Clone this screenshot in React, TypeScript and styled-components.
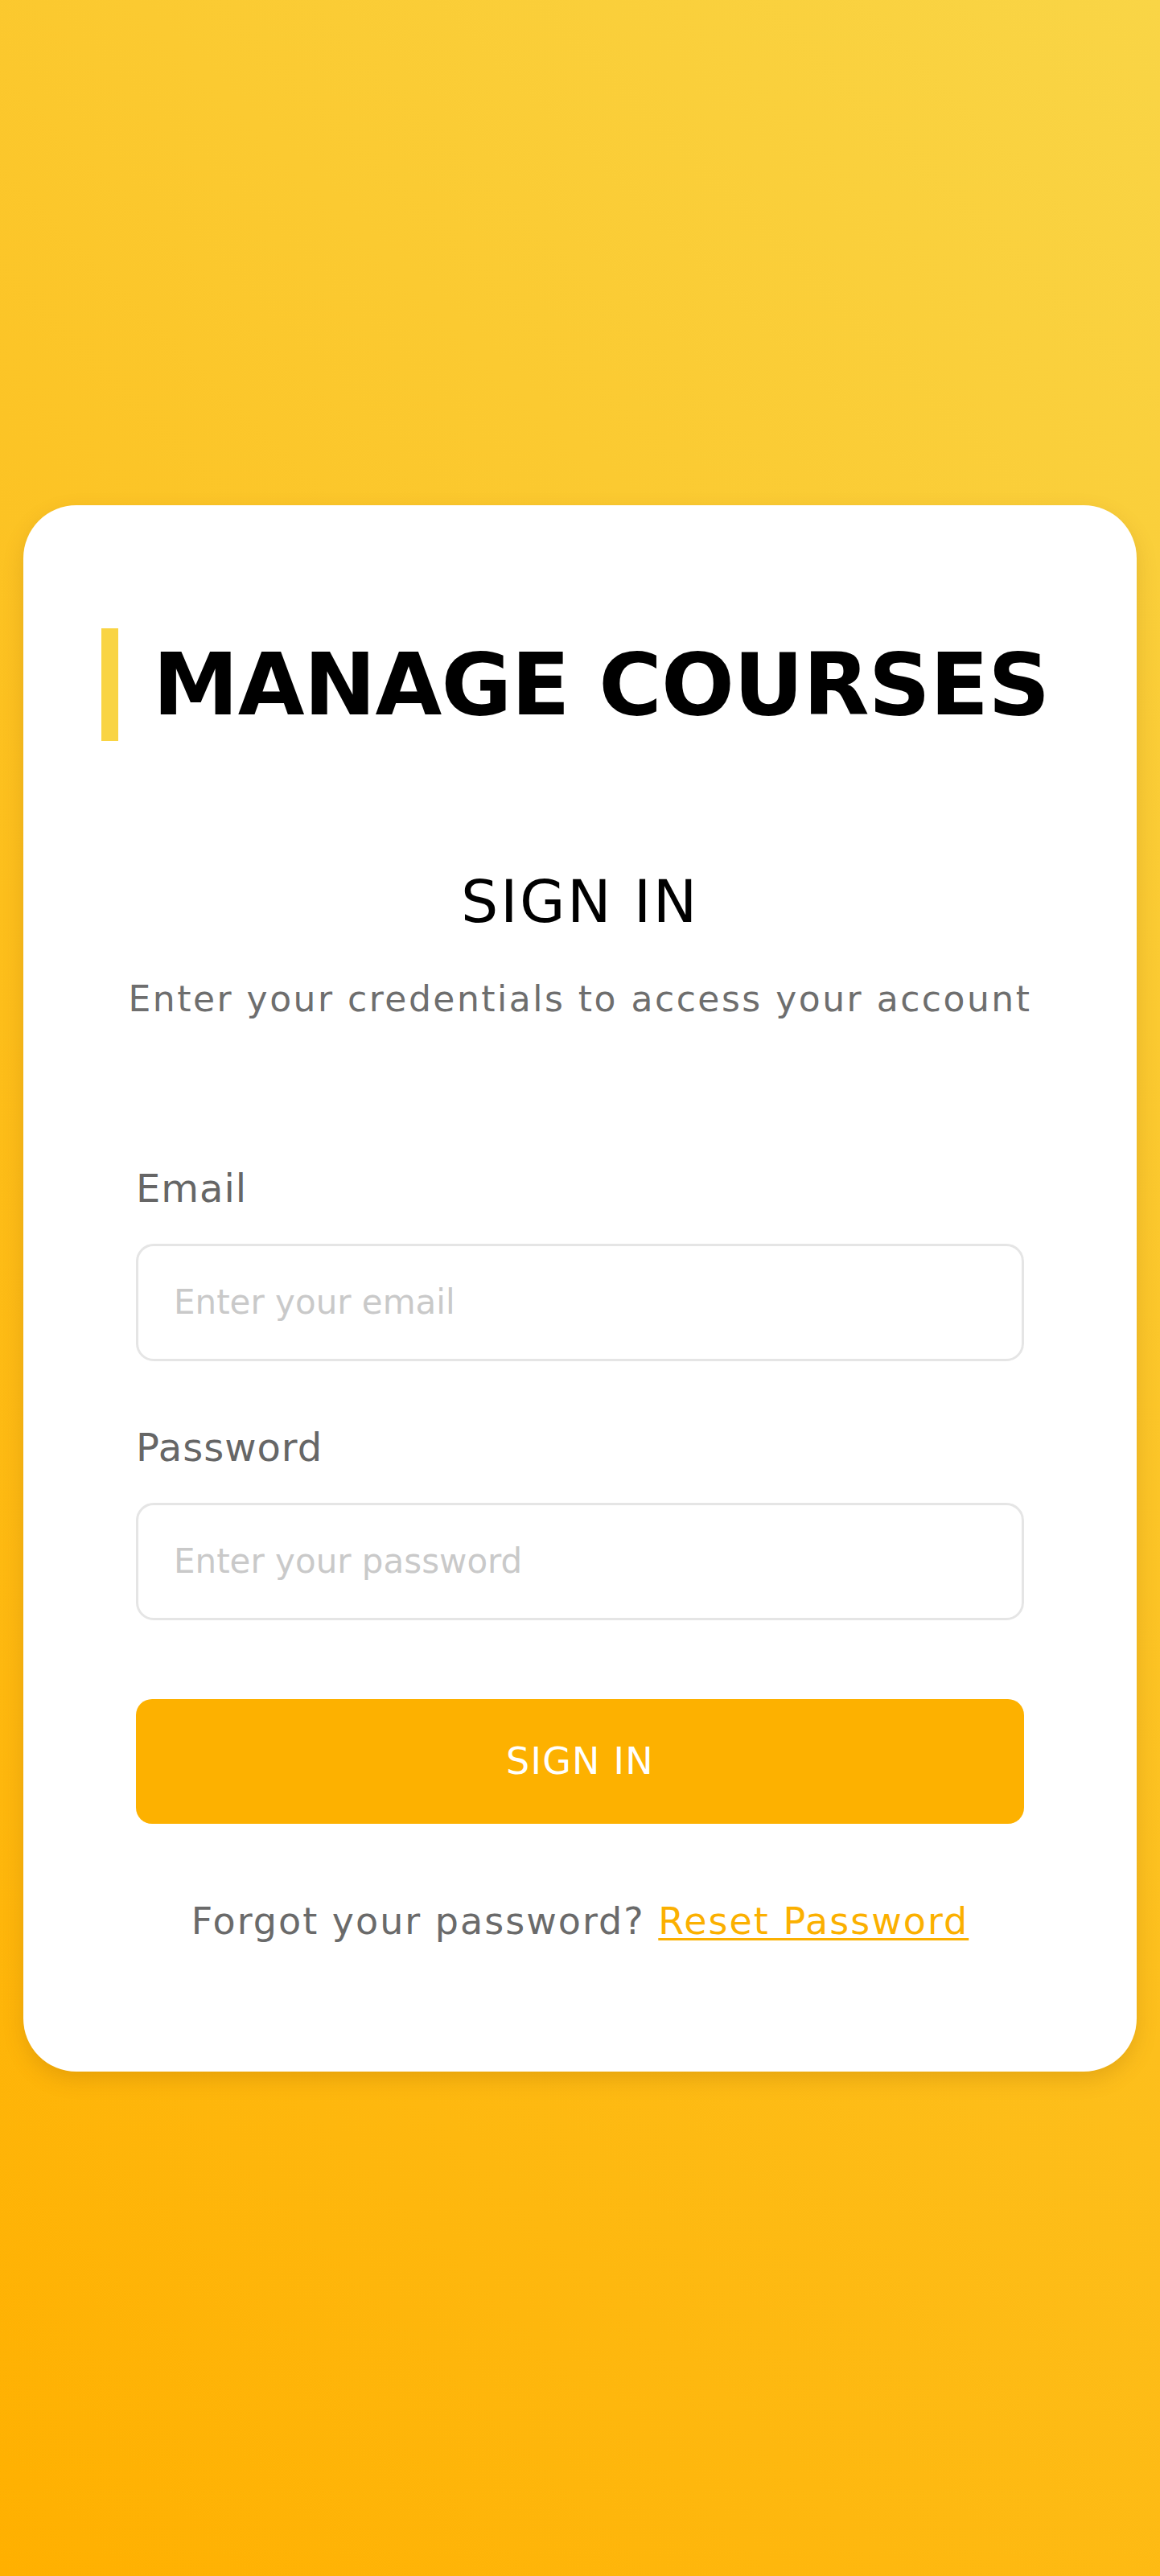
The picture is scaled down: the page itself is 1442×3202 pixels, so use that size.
import React from 'react';
import styled, { createGlobalStyle } from 'styled-components';

const GlobalStyle = createGlobalStyle`
    html, body {
        margin: 0;
        padding: 0;
    }
    body {
        font-family: 'DejaVu Sans', 'Liberation Sans', sans-serif;
    }
    * {
        box-sizing: border-box;
    }
`;

const Page = styled.div`
    min-height: 100vh;
    display: flex;
    align-items: center;
    padding: 0 29px;
    background: linear-gradient(45deg, #ffb000 0%, #fdbf1c 45%, #f9d546 100%);
`;

const Card = styled.div`
    width: 100%;
    background: #ffffff;
    border-radius: 66px;
    padding: 153px 97px 160px;
    box-shadow: 0 10px 26px rgba(120, 70, 0, 0.18);
`;

const Brand = styled.div`
    display: flex;
    align-items: center;
    gap: 43px;
`;

const BrandBar = styled.span`
    width: 21px;
    height: 140px;
    background: #f9d443;
`;

const BrandTitle = styled.h1`
    margin: 0;
    font-size: 107px;
    font-weight: 700;
    letter-spacing: -0.8px;
    line-height: 140px;
    color: #000;
`;

const Form = styled.form`
    display: flex;
    flex-direction: column;
    padding: 0 43px;
`;

const Title = styled.h2`
    margin: 157px 0 0;
    text-align: center;
    font-size: 73px;
    font-weight: 400;
    letter-spacing: 2.5px;
    line-height: normal;
    color: #000;
`;

const Subtitle = styled.p`
    margin: 53px -43px 0;
    text-align: center;
    font-size: 44px;
    letter-spacing: 2.5px;
    line-height: normal;
    color: #6e6e6e;
    white-space: nowrap;
`;

const Field = styled.div<{ $top: number }>`
    display: flex;
    flex-direction: column;
    gap: 41px;
    margin-top: ${(p) => p.$top}px;
`;

const Label = styled.label`
    font-size: 48px;
    letter-spacing: 1px;
    line-height: normal;
    color: #666666;
`;

const Input = styled.input`
    height: 146px;
    width: 100%;
    border: 3px solid #e5e5e5;
    border-radius: 22px;
    padding: 0 44px;
    font-family: inherit;
    font-size: 42px;
    color: #333;
    outline: none;
    background: #fff;

    &::placeholder {
        color: #c9c9c9;
    }
`;

const SubmitButton = styled.button`
    margin-top: 98px;
    height: 155px;
    width: 100%;
    border: none;
    border-radius: 20px;
    background: #fdb100;
    color: #ffffff;
    font-family: inherit;
    font-size: 46px;
    letter-spacing: 1.2px;
    cursor: pointer;
`;

const Footer = styled.p`
    margin: 94px 0 0;
    text-align: center;
    font-size: 46px;
    letter-spacing: 2px;
    line-height: normal;
    color: #6a6a6a;
    white-space: nowrap;
`;

const ResetLink = styled.a`
    color: #fbb000;
    text-decoration: underline;
    text-decoration-thickness: 3px;
    text-underline-offset: 5px;
    cursor: pointer;
`;

export default function App() {
    return (
        <>
            <GlobalStyle />
            <Page>
                <Card>
                    <Brand>
                        <BrandBar />
                        <BrandTitle>MANAGE COURSES</BrandTitle>
                    </Brand>
                    <Form onSubmit={(e) => e.preventDefault()}>
                        <Title>SIGN IN</Title>
                        <Subtitle>Enter your credentials to access your account</Subtitle>
                        <Field $top={182}>
                            <Label htmlFor="email">Email</Label>
                            <Input id="email" type="email" placeholder="Enter your email" />
                        </Field>
                        <Field $top={79}>
                            <Label htmlFor="password">Password</Label>
                            <Input id="password" type="password" placeholder="Enter your password" />
                        </Field>
                        <SubmitButton type="submit">SIGN IN</SubmitButton>
                        <Footer>
                            Forgot your password? <ResetLink href="#">Reset Password</ResetLink>
                        </Footer>
                    </Form>
                </Card>
            </Page>
        </>
    );
}
